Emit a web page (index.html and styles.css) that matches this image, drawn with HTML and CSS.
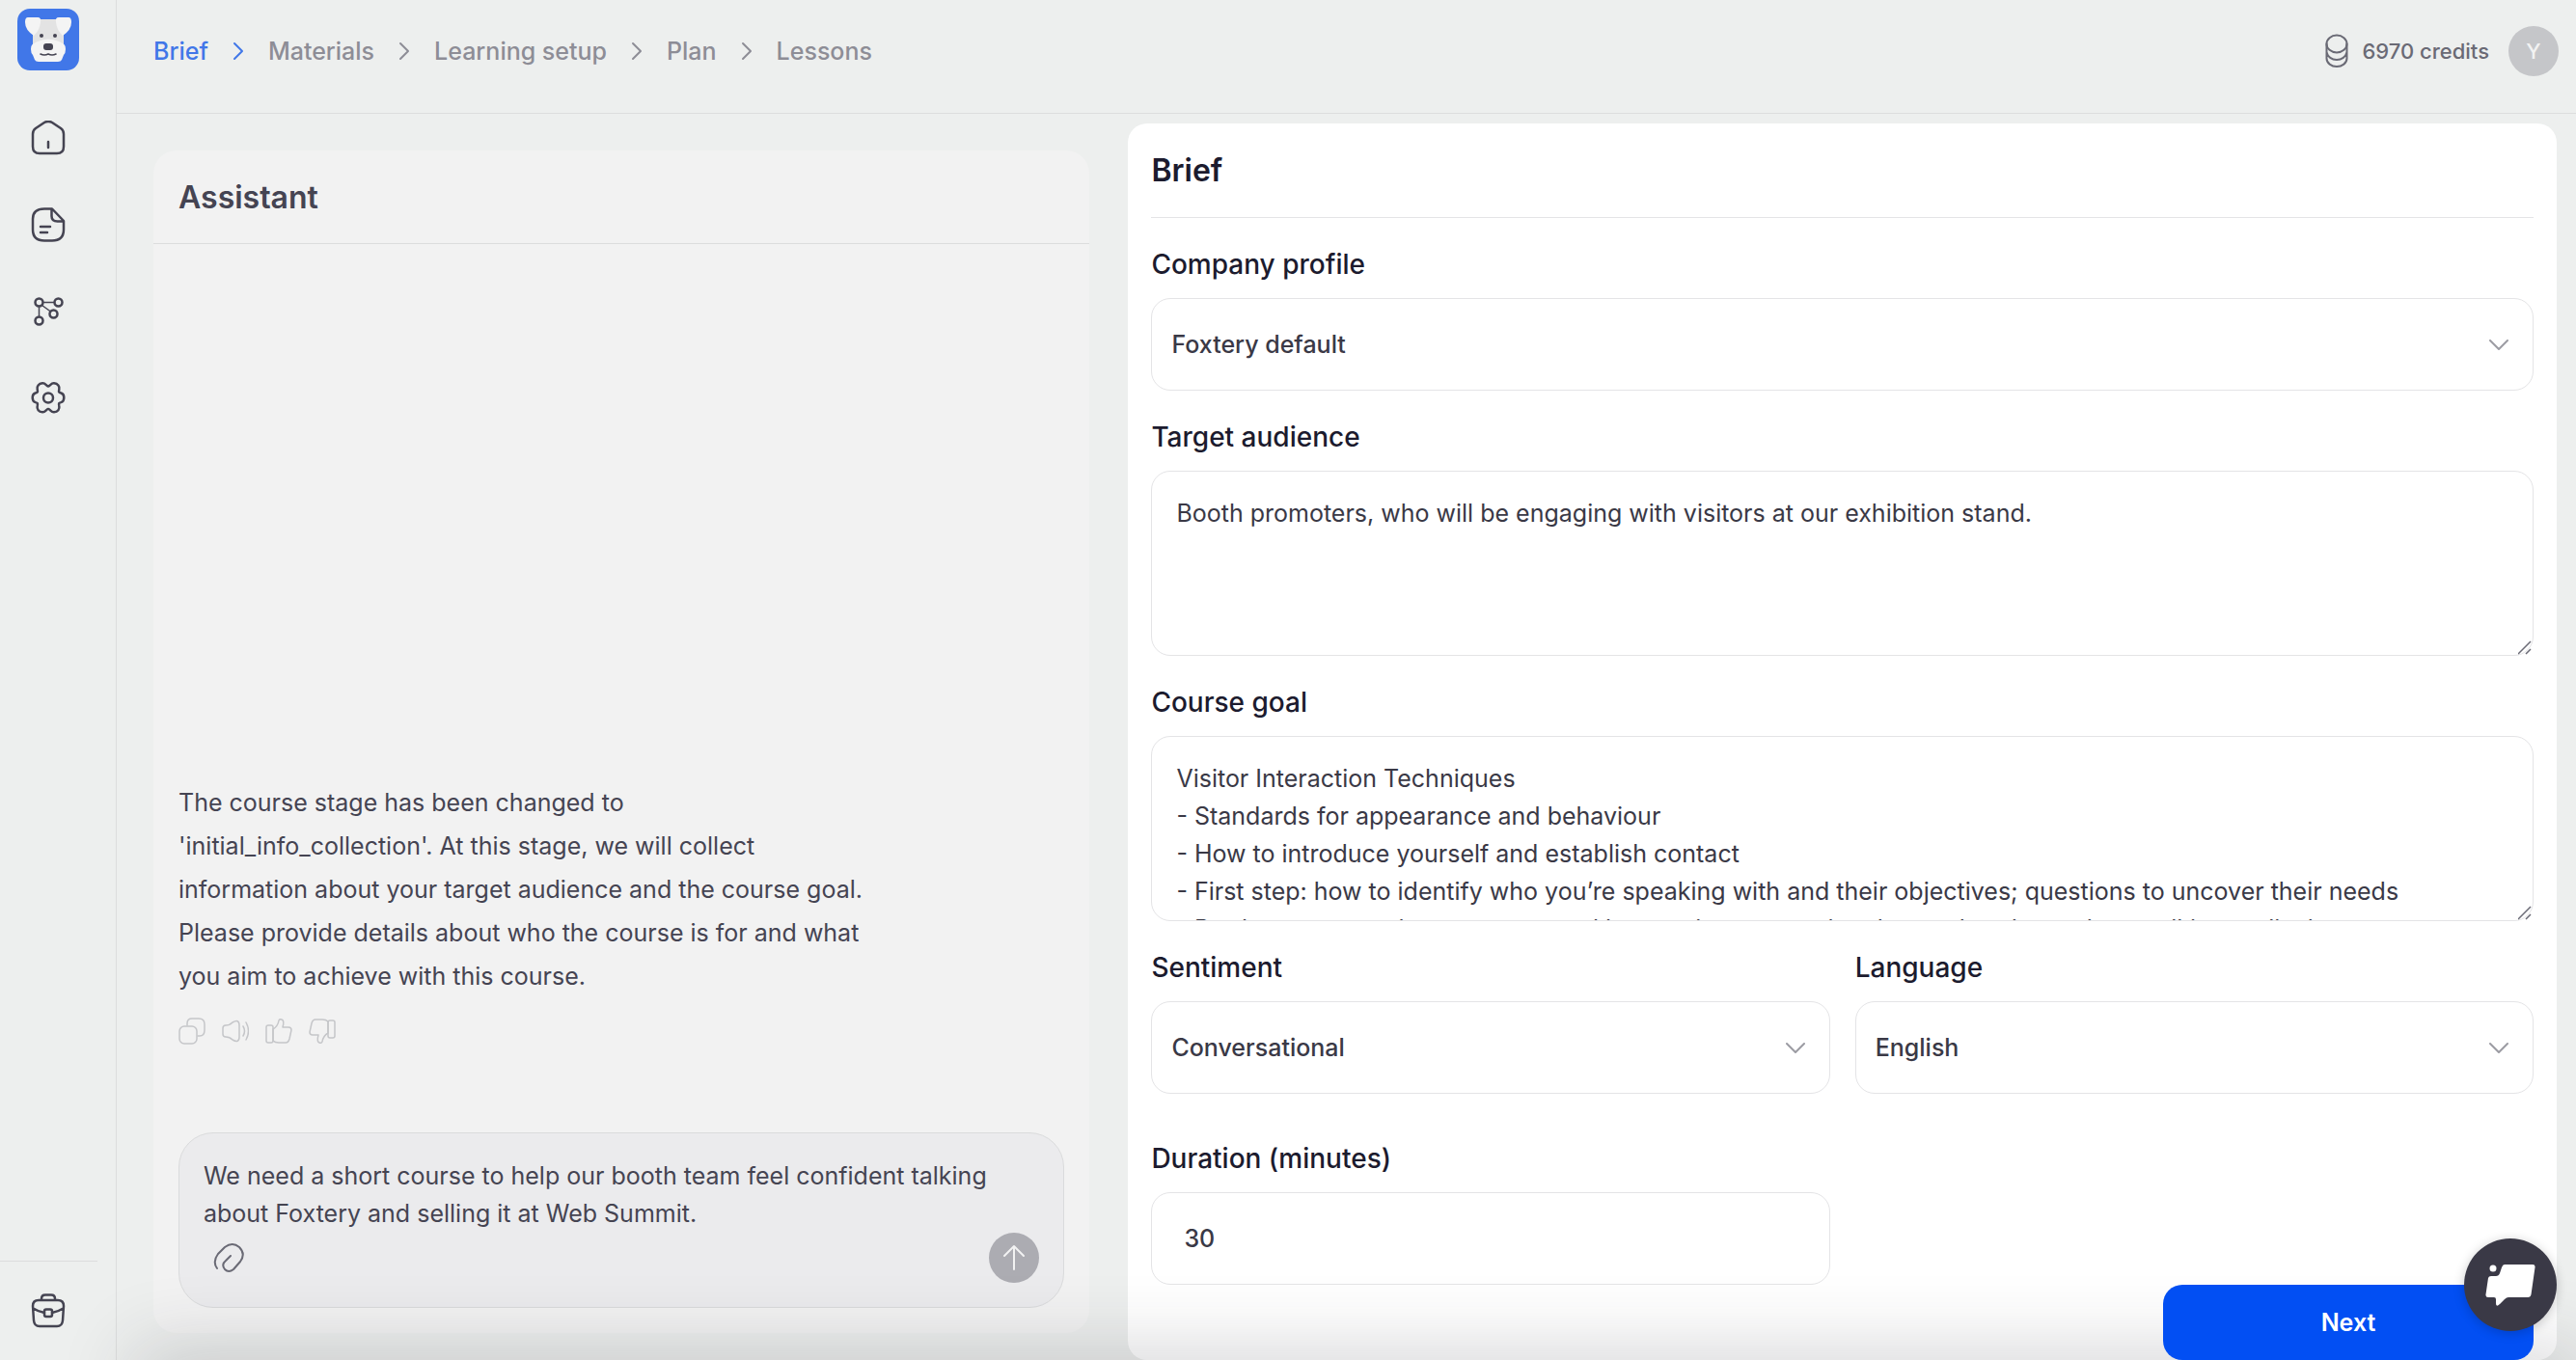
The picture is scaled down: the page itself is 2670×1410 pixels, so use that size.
FILE: index.html
```html
<!DOCTYPE html>
<html lang="en">
  <head>
    <meta charset="UTF-8" />
    <meta name="viewport" content="width=device-width, initial-scale=1.0" />
    <title>Foxtery - Brief</title>
    <link rel="stylesheet" href="styles.css">
  </head>
  <body>
    <aside class="sidebar">
      <a class="logo" href="#" aria-label="Foxtery">
        <svg viewBox="0 0 64 64">
          <rect width="64" height="64" rx="13" fill="#4177e8" />
          <path d="M18 11h28q2 6 2 14v13H16V25q0-8 2-14z" fill="#e3e3e3" />
          <path d="M11 9h10q4 0 3 5-1 9-7 14-9-6-9-14 0-5 3-5zM53 9H43q-4 0-3 5 1 9 7 14 9-6 9-14 0-5-3-5z" fill="#f4f4f4" />
          <path d="M24 33q8-3 16 0 11 3 10 9 0 4-2 6l-2 5q-1 2-4 2H22q-3 0-4-2l-2-5q-2-2-2-6-1-6 10-9z" fill="#f4f4f4" />
          <circle cx="25" cy="28" r="2" fill="#454452" />
          <circle cx="39" cy="28" r="2" fill="#454452" />
          <rect x="27" y="36" width="10" height="7" rx="3" fill="#454452" />
          <path d="M24 47q4 2 8 0 4 2 8 0" fill="none" stroke="#454452" stroke-width="1.6" stroke-linecap="round" />
        </svg>
      </a>
      <nav class="side-nav">
        <a href="#" aria-label="Home">
          <svg viewBox="0 0 36 36">
            <path d="M2 14q0-4 3-6l9-6q4-2 8 0l9 6q3 2 3 6v13q0 7-7 7H9q-7 0-7-7zM18 22v6" />
          </svg>
        </a>
        <a href="#" aria-label="Documents">
          <svg viewBox="0 0 36 36">
            <path d="M22 1.500H14Q2 1.500 2 12v11Q2 34.500 14 34.500h8q12 0 12-11.500V14zM21.500 2v7q0 5.500 6 5.500h6M10 20h10M10 26h7" />
          </svg>
        </a>
        <a href="#" aria-label="Workflows">
          <svg viewBox="0 0 36 36">
            <circle cx="8.500" cy="8.500" r="4" /><circle cx="28.500" cy="8.500" r="4" />
            <circle cx="23.500" cy="20.500" r="4" /><circle cx="8.500" cy="27.500" r="4" />
            <path class="thin" d="M12.500 8.500h12M8.500 12.500v11M11.500 11.500l9 6.500" />
          </svg>
        </a>
        <a href="#" aria-label="Settings">
          <svg viewBox="0 0 36 36">
            <path d="M18 5.500c2-.5 3-3.500 6-3.200 4 .4 6 3.200 5.300 6.200-.6 3-.3 3.500 2 4 2.200.6 3 2.200 3 4.800s-.8 4.200-3 4.800c-2.300.5-2.600 1-2 4 .7 3-1.300 5.800-5.300 6.200-3 .3-4-2.900-6-3.400-2 .5-3 3.700-6 3.400-4-.4-6-3.200-5.300-6.200.6-3 .3-3.500-2-4-2.200-.6-3-2.200-3-4.800s.8-4.200 3-4.800c2.300-.5 2.600-1 2-4C6 5.500 8 2.700 12 2.300c3-.3 4 2.700 6 3.200z" />
            <circle cx="18" cy="17.500" r="5" />
          </svg>
        </a>
      </nav>
      <div class="side-bottom">
        <a href="#" aria-label="Workspace">
          <svg viewBox="0 0 36 36">
            <path d="M11 7V5.500Q11 1.500 15 1.500h6q4 0 4 4V7M2 13q0-6 6-6h20q6 0 6 6l-1 15q-.5 6-6 6H9q-5.500 0-6-6zM2.500 15.500Q8 19 14 20M33.500 15.500Q28 19 22 20" />
            <rect x="14" y="16.500" width="8" height="7.500" rx="2" />
          </svg>
        </a>
      </div>
    </aside>

    <div class="page">
      <header class="topbar">
        <nav class="steps">
          <a class="active" href="#">Brief</a>
          <svg class="active" viewBox="0 0 12 20"><path d="M2 2l8 8-8 8" /></svg>
          <a href="#">Materials</a>
          <svg viewBox="0 0 12 20"><path d="M2 2l8 8-8 8" /></svg>
          <a href="#">Learning setup</a>
          <svg viewBox="0 0 12 20"><path d="M2 2l8 8-8 8" /></svg>
          <a href="#">Plan</a>
          <svg viewBox="0 0 12 20"><path d="M2 2l8 8-8 8" /></svg>
          <a href="#">Lessons</a>
        </nav>
        <div class="account">
          <svg class="coins" viewBox="0 0 24 36">
            <ellipse cx="12" cy="10.500" rx="10.500" ry="9" />
            <path d="M1.500 10.500v15c0 5 5 8.500 10.500 8.500s10.500-3.500 10.500-8.500v-15M1.500 19c1 5 5.500 8 10.500 8s9.500-3 10.500-8" />
          </svg>
          <span class="credits">6970 credits</span>
          <button class="avatar">Y</button>
        </div>
      </header>

      <main class="content">
        <section class="assistant">
          <h2>Assistant</h2>
          <div class="chat">
            <p class="message">
              The course stage has been changed to<br />
              'initial_info_collection'. At this stage, we will collect<br />
              information about your target audience and the course goal.<br />
              Please provide details about who the course is for and what<br />
              you aim to achieve with this course.
            </p>
            <div class="actions">
              <button aria-label="Copy">
                <svg viewBox="0 0 28 28"><path d="M9 8V6q0-5 5-5h7q6 0 6 6v6q0 6-5 6h-2" /><rect x="1" y="9" width="18" height="18" rx="5" /></svg>
              </button>
              <button aria-label="Read aloud">
                <svg viewBox="0 0 28 28"><path d="M1 11q0-3 3-3 4 0 7-3 7-4 7 3v12q0 7-7 3-3-3-7-3-3 0-3-3zM22 9q3 5 0 10M25 5q5 9 0 18" /></svg>
              </button>
              <button aria-label="Like">
                <svg viewBox="0 0 28 28"><path d="M8 12q5-3 6-9 1-2 3-1 3 1 1 8h6q3 0 3 3l-2 9q-1 4-4 4h-7q-4 0-6-2z" /><rect x="1" y="8" width="7" height="18" rx="2" /></svg>
              </button>
              <button aria-label="Dislike">
                <svg viewBox="0 0 28 28"><path d="M20 16q-5 3-6 9-1 2-3 1-3-1-1-8H4q-3 0-3-3l2-9q1-4 4-4h7q4 0 6 2z" /><rect x="20" y="3" width="7" height="18" rx="2" /></svg>
              </button>
            </div>
          </div>
          <form class="composer">
            <textarea aria-label="Message" rows="2">We need a short course to help our booth team feel confident talking
about Foxtery and selling it at Web Summit.</textarea>
            <div class="composer-bar">
              <button class="attach" type="button" aria-label="Attach file">
                <svg viewBox="0 0 32 32"><path d="M4 27Q-1 20 5 12l7-7Q20-1 27 5q7 7 1 15l-7 8q-5 4-9 0-4-5 1-9l5-5" /></svg>
              </button>
              <button class="send" type="button" aria-label="Send">
                <svg viewBox="0 0 24 28"><path d="M12 26V2M2 12L12 2l10 10" /></svg>
              </button>
            </div>
          </form>
        </section>

        <form class="brief">
          <h2>Brief</h2>
          <div class="field">
            <label for="company">Company profile</label>
            <div class="select">
              <select id="company"><option>Foxtery default</option></select>
              <svg viewBox="0 0 20 12"><path d="M1 1l9 9 9-9" /></svg>
            </div>
          </div>
          <div class="field">
            <label for="audience">Target audience</label>
            <textarea id="audience">Booth promoters, who will be engaging with visitors at our exhibition stand.</textarea>
          </div>
          <div class="field">
            <label for="goal">Course goal</label>
            <textarea id="goal">Visitor Interaction Techniques
- Standards for appearance and behaviour
- How to introduce yourself and establish contact
- First step: how to identify who you’re speaking with and their objectives; questions to uncover their needs
- Product presentation: structure and key tactics, presenting the product (two minute talking outline)</textarea>
          </div>
          <div class="row">
            <div class="field">
              <label for="sentiment">Sentiment</label>
              <div class="select">
                <select id="sentiment"><option>Conversational</option></select>
                <svg viewBox="0 0 20 12"><path d="M1 1l9 9 9-9" /></svg>
              </div>
            </div>
            <div class="field">
              <label for="language">Language</label>
              <div class="select">
                <select id="language"><option>English</option></select>
                <svg viewBox="0 0 20 12"><path d="M1 1l9 9 9-9" /></svg>
              </div>
            </div>
            <div class="field">
              <label for="duration">Duration (minutes)</label>
              <input id="duration" type="text" inputmode="numeric" value="30" />
            </div>
          </div>
          <button class="next" type="button">Next</button>
        </form>
      </main>
    </div>

    <button class="support" aria-label="Open support chat">
      <svg viewBox="0 0 52 44">
        <circle cx="8" cy="5" r="3.500" fill="#fff" />
        <path d="M20 1h29q3 0 2.500 3l-4 28q-.5 3-3.500 3H24q-2 0-4 2l-5 5q-4 4-4-1v-4q0-2-2-2H3q-3 0-2.500-3L3 15q.5-2 3-2h5q3 0 4-3l2-6q1-3 3-3z" fill="#fff" />
      </svg>
    </button>
  </body>
</html>
```

FILE: styles.css
```css
* {
  box-sizing: border-box;
}

body {
  margin: 0;
  display: flex;
  height: 100vh;
  overflow: hidden;
  font-family: Inter, "Liberation Sans", sans-serif;
  font-size: 25px;
  line-height: 39px;
  color: #454452;
  background-color: #edefee;
}

/* shade along the bottom edge of the window */
body::after {
  content: "";
  position: fixed;
  left: 150px;
  right: 0;
  bottom: -60px;
  height: 60px;
  box-shadow: 0 0 80px 10px rgba(40, 40, 50, 0.2);
  pointer-events: none;
}

a {
  color: inherit;
  text-decoration: none;
}

button,
input,
select,
textarea {
  font: inherit;
  color: inherit;
  outline: none;
}

button {
  border: none;
  padding: 0;
  background: none;
  cursor: pointer;
}

svg {
  display: block;
  fill: none;
  stroke-linecap: round;
  stroke-linejoin: round;
}

h2 {
  margin: 0;
  font-size: 32px;
  font-weight: 600;
}

.sidebar {
  flex: none;
  width: 121px;
  display: flex;
  flex-direction: column;
  border-right: 1px solid #dcdddd;
}

.logo {
  width: 64px;
  margin: 9px 0 0 18px;
}

.side-nav {
  display: flex;
  flex-direction: column;
  gap: 54px;
  margin: 52px 0 0 32px;
}

.sidebar nav svg,
.side-bottom svg {
  width: 36px;
  height: 36px;
  stroke: #454452;
  stroke-width: 2.5;
}

.sidebar .thin {
  stroke-width: 1.5;
}

.side-bottom {
  width: 101px;
  margin-top: auto;
  padding: 33px 0 33px 32px;
  border-top: 1px solid #dcdddd;
}

.page {
  flex: 1;
  min-width: 0;
  display: flex;
  flex-direction: column;
}

.topbar {
  flex: none;
  height: 118px;
  display: flex;
  align-items: flex-start;
  justify-content: space-between;
  padding: 27px 18px 0 38px;
  border-bottom: 1px solid #dcdddd;
}

.steps {
  display: flex;
  align-items: center;
  gap: 25px;
  height: 52px;
  font-weight: 500;
  color: #8d8d96;
}

.steps svg {
  width: 12px;
  height: 20px;
  stroke: #8d8d96;
  stroke-width: 2;
}

.steps a.active {
  color: #4177e8;
}

.steps svg.active {
  stroke: #4177e8;
}

.account {
  display: flex;
  align-items: center;
  font-size: 22px;
  font-weight: 500;
  color: #6a6a75;
}

.coins {
  width: 24px;
  height: 36px;
  stroke: #6a6a75;
  stroke-width: 2;
}

.credits {
  margin: 0 20px 0 14px;
}

.avatar {
  width: 52px;
  height: 52px;
  border-radius: 50%;
  color: #f2f2f2;
  background-color: #c5c6c9;
}

.content {
  flex: 1;
  min-height: 0;
  display: grid;
  grid-template-columns: 97fr 148fr;
  gap: 40px;
  padding: 10px 20px 0 38px;
}

.assistant {
  display: flex;
  flex-direction: column;
  margin: 28px 0;
  border-radius: 24px;
  background-color: #f2f2f2;
}

.assistant h2 {
  padding: 29px 26px 28px;
  border-bottom: 1px solid #dcdddd;
}

.chat {
  flex: 1;
  display: flex;
  flex-direction: column;
  justify-content: flex-end;
  padding: 0 26px;
}

.message {
  margin: 0;
  line-height: 45px;
}

.actions {
  display: flex;
  gap: 17px;
  margin: 20px 0 91px;
}

.actions svg {
  width: 28px;
  height: 28px;
  stroke: #c5c6c9;
  stroke-width: 1.5;
}

.composer {
  margin: 0 26px 26px;
  padding: 25px 25px 25px;
  border: 1px solid #dadbdc;
  border-radius: 36px;
  background-color: #ebebed;
}

.composer textarea {
  display: block;
  width: 100%;
  padding: 0;
  border: none;
  resize: none;
  overflow: hidden;
  background: none;
}

.composer-bar {
  display: flex;
  align-items: center;
  justify-content: space-between;
  padding-left: 10px;
}

.attach svg {
  width: 32px;
  height: 32px;
  stroke: #6a6a75;
  stroke-width: 2;
}

.send {
  display: grid;
  place-items: center;
  width: 52px;
  height: 52px;
  border-radius: 50%;
  background-color: #acacb2;
}

.send svg {
  width: 24px;
  height: 28px;
  stroke: #f2f2f2;
  stroke-width: 2;
}

.brief {
  display: flex;
  flex-direction: column;
  gap: 27px;
  padding: 0 24px;
  border-radius: 20px;
  color: #3a3946;
  background-color: #fff;
}

.brief h2 {
  padding: 29px 0;
  border-bottom: 1px solid #e4e4e6;
  color: #1c1b2e;
}

.field {
  display: flex;
  flex-direction: column;
  gap: 14px;
}

.field label {
  font-size: 28px;
  line-height: 42px;
  font-weight: 500;
  color: #1c1b2e;
}

.field textarea,
.field select,
.field input {
  display: block;
  width: 100%;
  height: 96px;
  border: 1px solid #e4e4e6;
  border-radius: 20px;
  background-color: #fff;
}

.field textarea {
  height: 192px;
  padding: 24px 25px;
  resize: vertical;
  overflow: hidden;
}

.field textarea::-webkit-resizer {
  background: url("data:image/svg+xml,%3Csvg xmlns='http://www.w3.org/2000/svg' width='15' height='15'%3E%3Cpath d='M0 14L13 1M8 14l5-5' stroke='%236a6a75' stroke-width='1.500'/%3E%3C/svg%3E") no-repeat;
}

.field select {
  padding: 0 60px 0 20px;
  appearance: none;
  font-weight: 500;
}

.field input {
  padding: 0 33px;
  font-weight: 500;
}

.select {
  position: relative;
}

.select svg {
  position: absolute;
  top: 43px;
  right: 26px;
  width: 20px;
  height: 12px;
  stroke: #9c9ca3;
  stroke-width: 2;
  pointer-events: none;
}

.row {
  display: grid;
  grid-template-columns: 1fr 1fr;
  gap: 46px 26px;
}

.next {
  position: relative;
  z-index: 1;
  flex: none;
  align-self: flex-end;
  width: 384px;
  height: 78px;
  margin-top: -27px;
  border-radius: 20px;
  font-weight: 600;
  color: #fff;
  background-color: #024ff3;
}

.support {
  position: fixed;
  z-index: 2;
  right: 20px;
  bottom: 30px;
  display: grid;
  place-items: center;
  width: 96px;
  height: 96px;
  border-radius: 50%;
  background-color: #3a3946;
  box-shadow: 0 2px 12px rgba(0, 0, 0, 0.2);
}

.support svg {
  width: 52px;
  height: 44px;
}
```
